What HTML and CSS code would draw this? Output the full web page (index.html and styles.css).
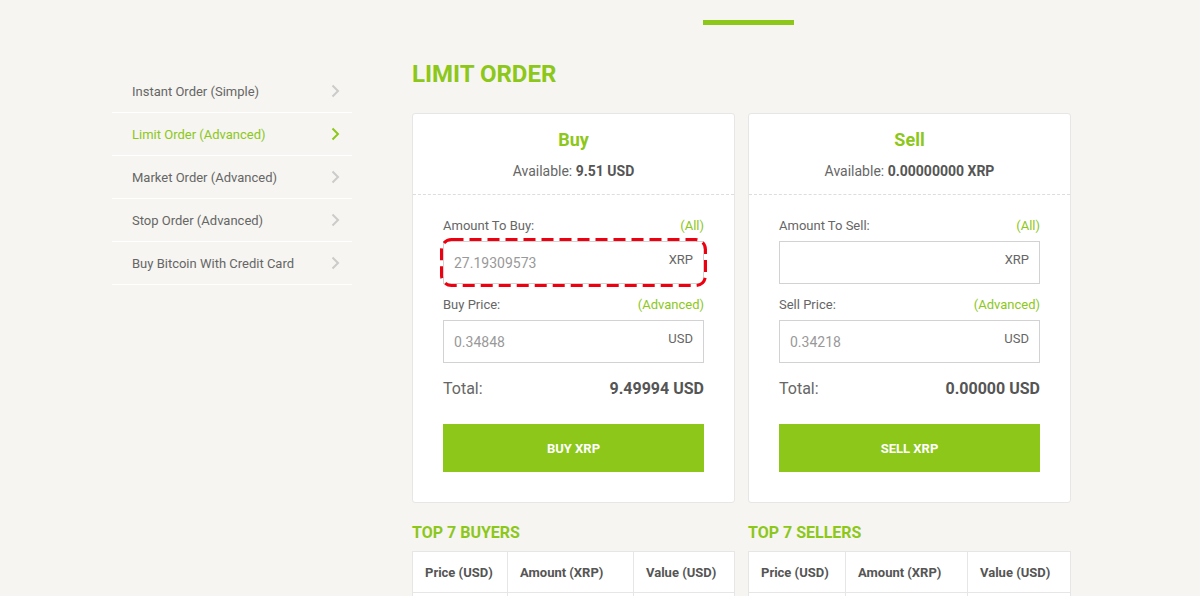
FILE: index.html
```html
<!DOCTYPE html>
<html>
<head>
<meta charset="utf-8">
<link rel="stylesheet" href="styles.css">
</head>
<body>
<div class="page">
  <div class="topbar"><span class="tab-line"></span></div>
  <div class="layout">
    <nav class="sidebar">
      <a class="nav-item"><span>Instant Order (Simple)</span><svg class="chev" width="9" height="14" viewBox="0 0 9 14"><path d="M1.5 1.5 L7 7 L1.5 12.5" fill="none" stroke="currentColor" stroke-width="2"/></svg></a>
      <a class="nav-item active"><span>Limit Order (Advanced)</span><svg class="chev" width="9" height="14" viewBox="0 0 9 14"><path d="M1.5 1.5 L7 7 L1.5 12.5" fill="none" stroke="currentColor" stroke-width="2"/></svg></a>
      <a class="nav-item"><span>Market Order (Advanced)</span><svg class="chev" width="9" height="14" viewBox="0 0 9 14"><path d="M1.5 1.5 L7 7 L1.5 12.5" fill="none" stroke="currentColor" stroke-width="2"/></svg></a>
      <a class="nav-item"><span>Stop Order (Advanced)</span><svg class="chev" width="9" height="14" viewBox="0 0 9 14"><path d="M1.5 1.5 L7 7 L1.5 12.5" fill="none" stroke="currentColor" stroke-width="2"/></svg></a>
      <a class="nav-item"><span>Buy Bitcoin With Credit Card</span><svg class="chev" width="9" height="14" viewBox="0 0 9 14"><path d="M1.5 1.5 L7 7 L1.5 12.5" fill="none" stroke="currentColor" stroke-width="2"/></svg></a>
    </nav>
    <main class="main">
      <h1 class="title">LIMIT ORDER</h1>
      <div class="cards">
        <section class="card">
          <div class="card-head">
            <h2>Buy</h2>
            <p class="avail">Available: <b>9.51 USD</b></p>
          </div>
          <div class="card-body">
            <div class="row-label"><span>Amount To Buy:</span><span class="link">(All)</span></div>
            <div class="field"><span class="val">27.19309573</span><span class="unit">XRP</span><svg class="mark" width="267" height="49" viewBox="0 0 267 49"><rect x="1.5" y="1.5" width="264" height="46" rx="10" ry="10" fill="none" stroke="#ee0010" stroke-width="3" stroke-dasharray="12 6"/></svg></div>
            <div class="row-label"><span>Buy Price:</span><span class="link">(Advanced)</span></div>
            <div class="field"><span class="val">0.34848</span><span class="unit">USD</span></div>
            <div class="total"><span>Total:</span><b>9.49994 USD</b></div>
            <button class="btn">BUY XRP</button>
          </div>
        </section>
        <section class="card">
          <div class="card-head">
            <h2>Sell</h2>
            <p class="avail">Available: <b>0.00000000 XRP</b></p>
          </div>
          <div class="card-body">
            <div class="row-label"><span>Amount To Sell:</span><span class="link">(All)</span></div>
            <div class="field"><span class="val"></span><span class="unit">XRP</span></div>
            <div class="row-label"><span>Sell Price:</span><span class="link">(Advanced)</span></div>
            <div class="field"><span class="val">0.34218</span><span class="unit">USD</span></div>
            <div class="total"><span>Total:</span><b>0.00000 USD</b></div>
            <button class="btn">SELL XRP</button>
          </div>
        </section>
      </div>
      <div class="tables">
        <div class="tbl-block">
          <h3>TOP 7 BUYERS</h3>
          <table>
            <tr><th class="c1">Price (USD)</th><th class="c2">Amount (XRP)</th><th>Value (USD)</th></tr>
            <tr><td></td><td></td><td></td></tr>
          </table>
        </div>
        <div class="tbl-block">
          <h3>TOP 7 SELLERS</h3>
          <table>
            <tr><th class="s1">Price (USD)</th><th class="s2">Amount (XRP)</th><th>Value (USD)</th></tr>
            <tr><td></td><td></td><td></td></tr>
          </table>
        </div>
      </div>
    </main>
  </div>
</div>
</body>
</html>
```

FILE: styles.css
```css
* { box-sizing: border-box; }
html, body { margin: 0; padding: 0; }
body {
  background: #f6f5f1;
  font-family: Roboto, "Liberation Sans", Arial, sans-serif;
  color: #666;
  overflow: hidden;
}
.page { width: 976px; margin: 0 auto; }
.topbar { height: 70px; padding-top: 20px; }
.tab-line {
  display: block;
  width: 91px;
  height: 5px;
  margin-left: 591px;
  background: #8cc71a;
}
.layout { display: flex; gap: 60px; align-items: flex-start; }
.sidebar { width: 240px; display: flex; flex-direction: column; }
.nav-item {
  height: 43px;
  display: flex;
  align-items: center;
  justify-content: space-between;
  padding: 0 12px 0 20px;
  border-bottom: 1px solid #fff;
  font-size: 13px;
  color: #666;
}
.nav-item .chev { color: #cbcbcb; }
.nav-item.active { color: #8cc71a; }
.nav-item.active .chev { color: #8cc71a; }

.main { width: 659px; }
.title {
  margin: -11px 0 0;
  height: 54px;
  font-size: 24px;
  line-height: 30px;
  font-weight: 700;
  color: #8cc71a;
}
.cards { display: flex; gap: 13px; }
.card {
  width: 323px;
  background: #fff;
  border: 1px solid #e6e6e6;
  border-radius: 3px;
}
.card-head {
  text-align: center;
  padding: 14px 0 13px;
  border-bottom: 1px dashed #ddd;
}
.card-head h2 {
  margin: 0;
  font-size: 18px;
  line-height: 24px;
  font-weight: 700;
  color: #8cc71a;
}
.avail {
  margin: 9px 0 0;
  font-size: 14px;
  line-height: 20px;
  color: #666;
}
.avail b { color: #555; }
.card-body { padding: 23px 30px 30px; }
.row-label {
  display: flex;
  justify-content: space-between;
  font-size: 13px;
  line-height: 16px;
  color: #666;
  margin-bottom: 7px;
}
.row-label .link { color: #8cc71a; }
.field {
  position: relative;
  height: 43px;
  border: 1px solid #d2d2d2;
  display: flex;
  justify-content: space-between;
  padding: 0 10px;
  margin-bottom: 13px;
}
.field .val { font-size: 14px; color: #999; line-height: 20px; margin-top: 11px; }
.field .unit { font-size: 13px; color: #666; line-height: 16px; margin-top: 10px; }
.field .mark {
  position: absolute;
  left: -4px;
  top: -4px;
}
.total {
  display: flex;
  justify-content: space-between;
  align-items: center;
  font-size: 16px;
  line-height: 20px;
  margin-top: 16px;
}
.total b { color: #555; }
.btn {
  display: block;
  width: 100%;
  height: 48px;
  margin-top: 25px;
  border: 0;
  background: #8cc71a;
  color: #fff;
  font-family: Roboto, "Liberation Sans", Arial, sans-serif;
  font-size: 13px;
  font-weight: 700;
}
.tables { display: flex; gap: 13px; margin-top: 20px; }
.tbl-block { width: 323px; }
.tbl-block h3 {
  margin: 0 0 8px;
  font-size: 16px;
  line-height: 20px;
  font-weight: 700;
  color: #8cc71a;
}
table {
  width: 100%;
  border-collapse: collapse;
  background: #fff;
}
th, td {
  border: 1px solid #e6e6e6;
  text-align: left;
  padding: 0 12px;
  font-size: 13px;
}
th { height: 41px; font-weight: 700; color: #555; }
td { height: 41px; }
.c1 { width: 95px; }
.c2 { width: 126px; }
.s1 { width: 97px; }
.s2 { width: 122px; }
```
